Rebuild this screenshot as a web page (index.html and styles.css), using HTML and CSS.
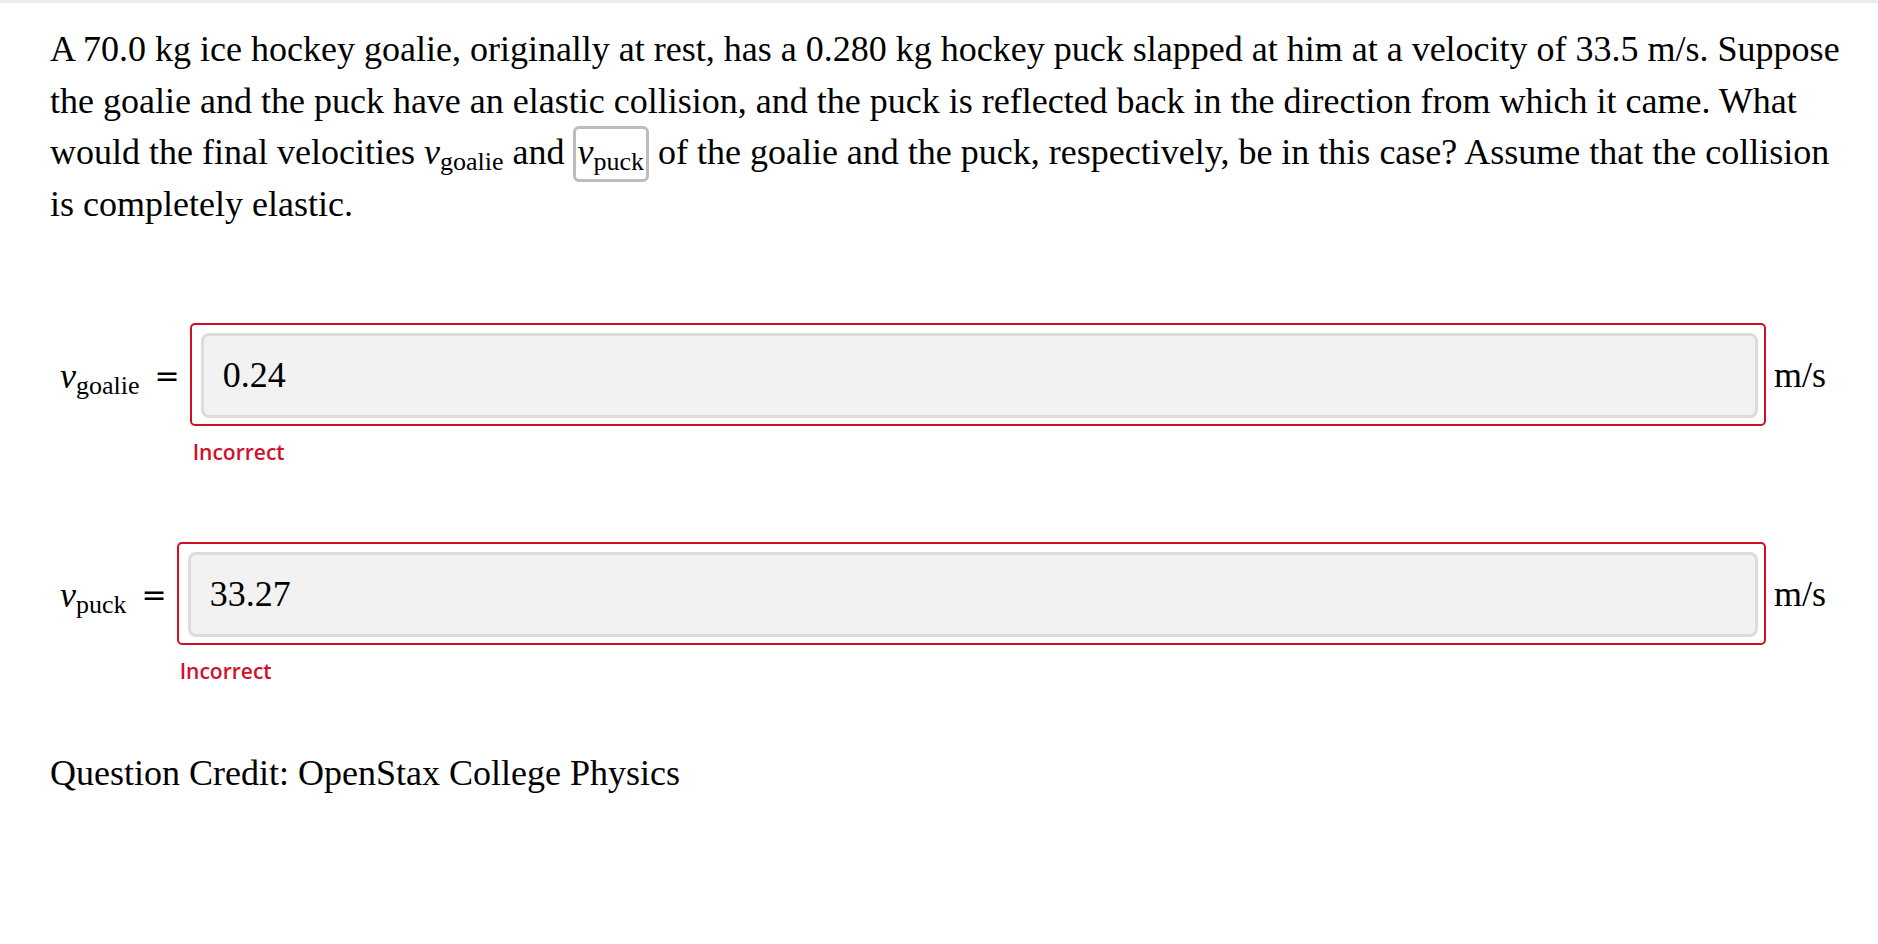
FILE: index.html
```html
<!DOCTYPE html>
<html>
<head>
<meta charset="utf-8">
<link rel="stylesheet" href="styles.css">
</head>
<body>
<div class="topline"></div>
<main class="page">
  <p class="question">A 70.0 kg ice hockey goalie, originally at rest, has a 0.280 kg hockey puck slapped at him at a velocity of 33.5 m/s. Suppose the goalie and the puck have an elastic collision, and the puck is reflected back in the direction from which it came. What would the final velocities <span class="math"><i class="mv">v</i><sub class="msub">goalie</sub></span> and <span class="math boxed"><i class="mv">v</i><sub class="msub">puck</sub></span> of the goalie and the puck, respectively, be in this case? Assume that the collision is completely elastic.</p>

  <div class="answers">
    <div class="row">
      <div class="label"><span class="math"><i class="mv">v</i><sub class="msub">goalie</sub></span><span class="eq">=</span></div>
      <div class="col">
        <div class="field-line">
          <div class="wrong"><div class="input">0.24</div></div>
          <div class="unit">m/s</div>
        </div>
        <div class="feedback">Incorrect</div>
      </div>
    </div>
    <div class="row row2">
      <div class="label"><span class="math"><i class="mv">v</i><sub class="msub">puck</sub></span><span class="eq">=</span></div>
      <div class="col">
        <div class="field-line">
          <div class="wrong"><div class="input">33.27</div></div>
          <div class="unit">m/s</div>
        </div>
        <div class="feedback">Incorrect</div>
      </div>
    </div>
  </div>

  <p class="credit">Question Credit: OpenStax College Physics</p>
</main>
</body>
</html>
```
FILE: styles.css
```css
html, body {
  margin: 0;
  padding: 0;
  background: #fff;
}
body {
  font-family: "Liberation Serif", "Times New Roman", serif;
  color: #000;
}
.topline {
  height: 3px;
  background: #ececec;
}
.page {
  padding: 21px 36px 0 50px;
}
.question {
  margin: 0;
  font-size: 36px;
  line-height: 51.5px;
}
.math {
  white-space: nowrap;
}
.mv {
  font-style: italic;
  font-size: 36px;
}
.msub {
  font-size: 26px;
  vertical-align: -6px;
  line-height: 0;
}
.boxed {
  border: 3px solid #bdbdbd;
  border-radius: 6px;
  padding: 3px 2px 7px 1px;
}
.answers {
  margin-top: 93px;
  margin-right: 16px;
}
.row {
  display: flex;
  align-items: flex-start;
}
.row2 {
  margin-top: 77px;
}
.label {
  height: 102px;
  display: flex;
  align-items: center;
  padding-left: 10px;
  white-space: nowrap;
}
.label .math {
  padding-top: 4px;
}
.eq {
  margin: 0 10px 0 15px;
  font-family: "DejaVu Sans", sans-serif;
  font-size: 30px;
  padding-top: 2px;
}
.col {
  flex: 1;
}
.field-line {
  display: flex;
  align-items: center;
}
.wrong {
  flex: 1;
  border: 2px solid #d0101f;
  border-radius: 5px;
  padding: 8px 6px 6px 9px;
}
.input {
  height: 78px;
  border: 3px solid #dcdcdc;
  border-radius: 8px;
  background: #f2f2f2;
  display: flex;
  align-items: center;
  padding-left: 19px;
  font-size: 36px;
  padding-bottom: 1px;
}
.unit {
  margin-left: 8px;
  font-size: 36px;
}
.feedback {
  margin: 13px 0 0 3px;
  font-family: "Open Sans", "Liberation Sans", sans-serif;
  font-weight: 600;
  font-size: 21px;
  line-height: 26px;
  color: #d0102c;
}
.credit {
  margin: 64px 0 0;
  font-size: 36px;
  line-height: 51.5px;
}
```
